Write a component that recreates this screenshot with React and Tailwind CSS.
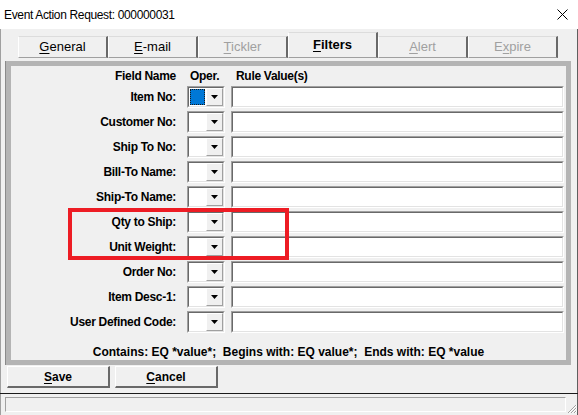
import React from 'react';

const fields = [
  'Item No:',
  'Customer No:',
  'Ship To No:',
  'Bill-To Name:',
  'Ship-To Name:',
  'Qty to Ship:',
  'Unit Weight:',
  'Order No:',
  'Item Desc-1:',
  'User Defined Code:',
];

const tabs = [
  { pre: '', u: 'G', post: 'eneral' },
  { pre: '', u: 'E', post: '-mail' },
  { pre: '', u: 'T', post: 'ickler', disabled: true },
  { pre: '', u: 'F', post: 'ilters', active: true },
  { pre: '', u: 'A', post: 'lert', disabled: true },
  { pre: 'E', u: 'x', post: 'pire', disabled: true },
];

const Sunken = ({ className, children }) => (
  <div className={`border-t border-l border-[#a0a0a0] border-b border-r border-b-white border-r-white ${className}`}>
    <div className="w-full h-full border-t border-l border-[#696969] border-b border-r border-b-[#e3e3e3] border-r-[#e3e3e3] bg-white flex">
      {children}
    </div>
  </div>
);

const Combo = ({ focused }) => (
  <Sunken className="w-[38px] h-[22px] ml-[11px] shrink-0">
    <div className="flex-1 p-px">
      {focused && <div className="w-full h-full bg-[#0078d7] border border-dotted border-[#1a1a1a]" />}
    </div>
    <div className="w-[17px] h-full bg-[#f0f0f0] border-t border-l border-white border-b border-r border-b-[#a0a0a0] border-r-[#a0a0a0] flex items-center justify-center">
      <svg width="7" height="4" viewBox="0 0 7 4">
        <polygon points="0,0 7,0 3.5,4" fill="#000" />
      </svg>
    </div>
  </Sunken>
);

const App = () => {
  return (
    <div className="w-[578px] h-[415px] bg-[#f0f0f0] flex flex-col relative overflow-hidden font-['Liberation_Sans',Arial,sans-serif] text-black">
      {/* Title bar */}
      <div className="h-[29px] bg-white flex items-center justify-between pl-[4px] pr-[10px] shrink-0">
        <span className="text-[12px] tracking-[-0.35px]">Event Action Request: 000000031</span>
        <svg width="11" height="11" viewBox="0 0 11 11">
          <path d="M0.5 0.5 L10.5 10.5 M10.5 0.5 L0.5 10.5" stroke="#000" strokeWidth="1" />
        </svg>
      </div>

      <div className="flex-1 flex flex-col shadow-[inset_1px_0_0_#a0a0a0,inset_-1px_0_0_#5f5f5f]">
        {/* Tabs */}
        <div className="h-[29px] flex items-end pl-[18px] shrink-0">
          {tabs.map((t, i) => (
            <div
              key={i}
              className={`w-[90px] flex items-center justify-center border-t border-t-[#dcdcdc] border-l border-l-white border-r-2 border-r-[#696969] border-b border-b-[#a0a0a0] text-[13px] ${
                t.active ? 'h-[26px] font-bold' : 'h-[22px]'
              } ${t.disabled ? 'text-[#a0a0a0]' : 'text-black'}`}
            >
              <span>
                {t.pre}
                <span className="underline underline-offset-2">{t.u}</span>
                {t.post}
              </span>
            </div>
          ))}
        </div>

        {/* Panel */}
        <div className="mt-[3px] ml-[6px] w-[565px] h-[304px] border-[5px] border-[#b4b4b4] shadow-[-1px_0_0_#8a8a8a] shrink-0 flex flex-col text-[12px] font-bold tracking-[-0.3px]">
          <div className="mt-[3px] h-[14px] flex items-center">
            <div className="w-[165px] text-right">Field Name</div>
            <div className="w-[44px] ml-[11px] pl-[3px]">Oper.</div>
            <div className="pl-[5px]">Rule Value(s)</div>
          </div>
          <div className="mt-[3px] flex flex-col gap-[3px]">
            {fields.map((f, i) => (
              <div key={f} className="h-[22px] flex items-center">
                <div className="w-[165px] text-right shrink-0">{f}</div>
                <Combo focused={i === 0} />
                <Sunken className="w-[333px] h-[22px] ml-[6px] shrink-0" />
              </div>
            ))}
          </div>
          <div className="mt-[12px] h-[14px] flex items-center justify-center tracking-[0px]">
            Contains: EQ *value*;&nbsp; Begins with: EQ value*;&nbsp; Ends with: EQ *value
          </div>
        </div>

        {/* Buttons */}
        <div className="mt-[1px] flex shrink-0 text-[12px] font-bold">
          <button className="ml-[7px] w-[103px] h-[22px] bg-[#f0f0f0] border-t border-l border-white border-b-2 border-r-2 border-b-[#696969] border-r-[#696969] flex items-center justify-center">
            <span><span className="underline underline-offset-2">S</span>ave</span>
          </button>
          <button className="ml-[5px] w-[103px] h-[22px] bg-[#f0f0f0] border-t border-l border-white border-b-2 border-r-2 border-b-[#696969] border-r-[#696969] flex items-center justify-center">
            <span><span className="underline underline-offset-2">C</span>ancel</span>
          </button>
        </div>

        <div className="mt-[5px] h-px bg-[#1a1a1a] shrink-0" />

        {/* Status bar */}
        <div className="mt-[3px] ml-[5px] w-[561px] h-[15px] border-t border-l border-[#a0a0a0] border-b border-r border-b-white border-r-white shrink-0" />
      </div>

      {/* Resize grip */}
      <svg className="absolute right-[1px] bottom-[1px]" width="12" height="12" viewBox="0 0 12 12">
        <path d="M11 3 L3 11 M11 6 L6 11 M11 9 L9 11" stroke="#a0a0a0" strokeWidth="1" />
        <path d="M12 3 L4 11 M12 6 L7 11 M12 9 L10 11" stroke="#ffffff" strokeWidth="1" />
      </svg>

      {/* Red highlight */}
      <div className="absolute left-[68px] top-[208px] w-[221px] h-[52px] border-4 border-[#ed1c24] pointer-events-none" />
    </div>
  );
};

export default App;
